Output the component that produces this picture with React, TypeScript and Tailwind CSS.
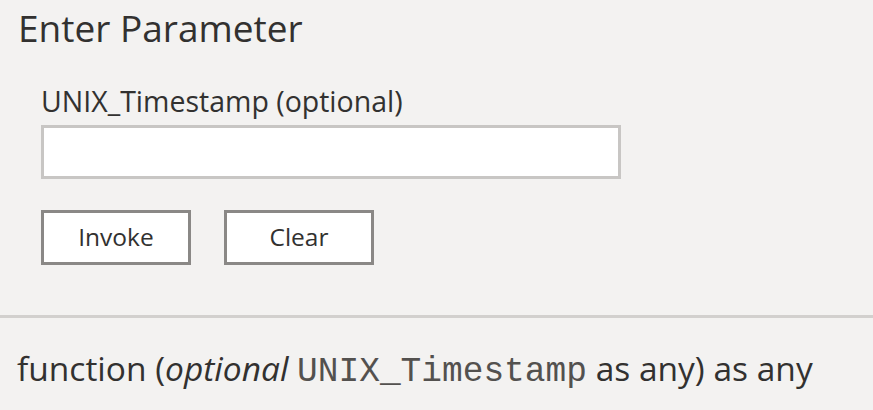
export default function App() {
  return (
    <div className="w-[873px] h-[410px] overflow-hidden bg-[#f3f2f1] text-[#323130] font-['Open_Sans',sans-serif]">
      <div className="px-[18px] pt-[4px]">
        <h1 className="text-[37px] leading-[48px]">Enter Parameter</h1>

        <div className="pl-[23px] pt-[31px]">
          <label className="block text-[28.5px] leading-[36px]">
            UNIX_Timestamp (optional)
          </label>
          <input
            type="text"
            className="block mt-[6px] w-[580px] h-[54px] border-[3px] border-[#c8c6c4] bg-white outline-none"
          />

          <div className="flex gap-[33px] mt-[31px]">
            <button className="w-[150px] h-[55px] border-[3px] border-[#8a8886] bg-white text-[24.5px]">
              Invoke
            </button>
            <button className="w-[150px] h-[55px] border-[3px] border-[#8a8886] bg-white text-[24.5px]">
              Clear
            </button>
          </div>
        </div>
      </div>

      <div className="mt-[50px] border-t-[3px] border-[#d2d0ce] px-[17px] pt-[28px]">
        <p className="text-[33.5px] leading-[44px] whitespace-nowrap">
          function (<i>optional</i>{" "}
          <span className="font-['Liberation_Mono',monospace] text-[34.5px] text-[#53514f]">
            UNIX_Timestamp
          </span>{" "}
          as any) as any
        </p>
      </div>
    </div>
  );
}
